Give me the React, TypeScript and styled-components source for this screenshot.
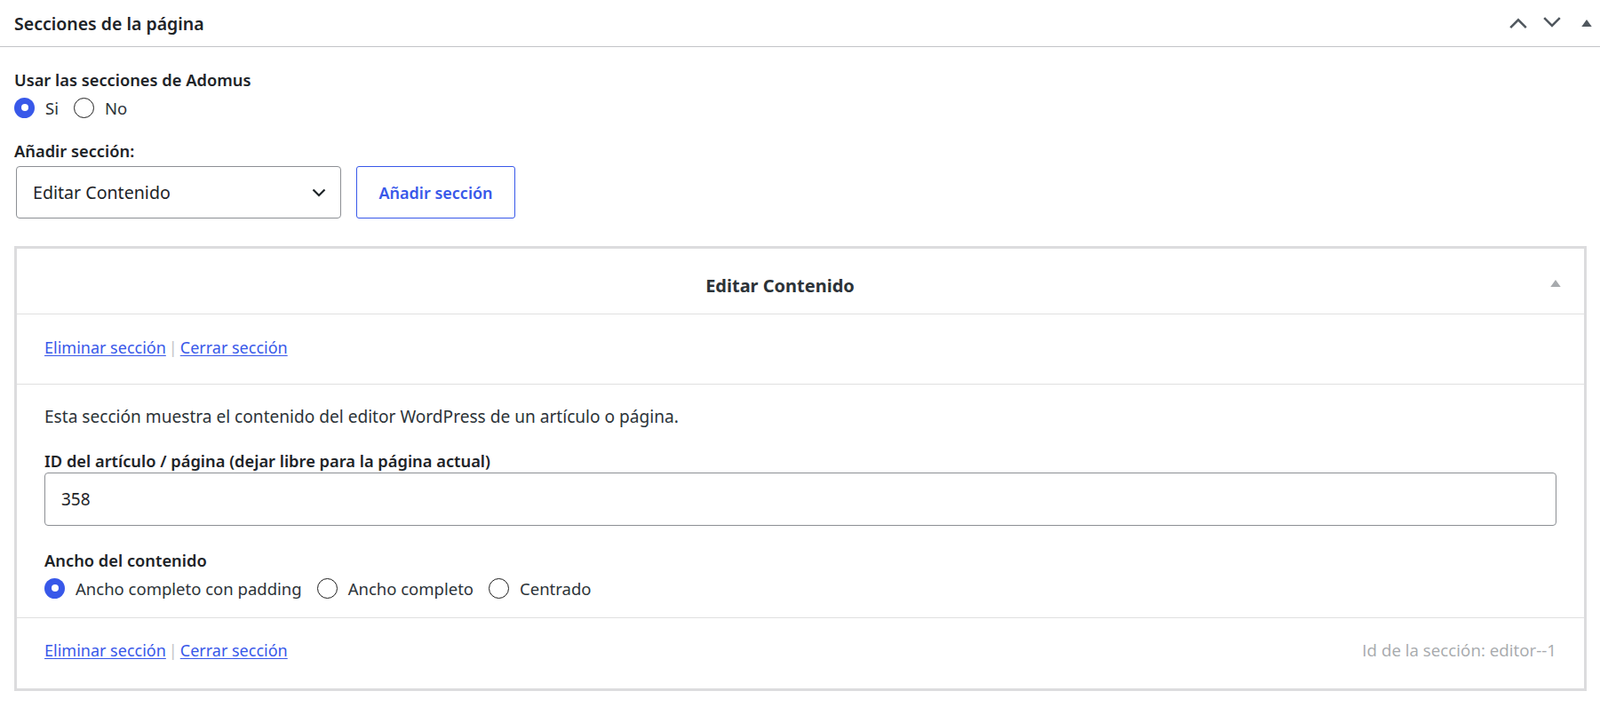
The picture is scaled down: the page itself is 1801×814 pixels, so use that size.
import React, { useState } from 'react'
import styled, { createGlobalStyle } from 'styled-components'

const GlobalStyle = createGlobalStyle`
  body {
    margin: 0;
    background: #fff;
    font-family: "Noto Sans", "Open Sans", sans-serif;
    color: #1d2327;
  }
`

const BLUE = '#3858e9'

const Panel = styled.div`
  width: 100%;
`

const PanelHeader = styled.div`
  height: 52px;
  display: flex;
  align-items: center;
  justify-content: space-between;
  padding: 0 9px 0 16px;
  border-bottom: 1px solid #c3c4c7;
`

const PanelTitle = styled.h2`
  margin: 0;
  font-size: 19.5px;
  font-weight: 600;
  color: #1d2327;
`

const HeaderActions = styled.div`
  display: flex;
  align-items: center;
`

const IconButton = styled.span<{ $ml?: number }>`
  display: flex;
  align-items: center;
  justify-content: center;
  margin-left: ${p => p.$ml ?? 0}px;
  color: #50575e;
`

const PanelBody = styled.div`
  padding: 25px 15px 36px 16px;
`

const FieldLabel = styled.div<{ $gap?: number }>`
  font-size: 18.3px;
  font-weight: 600;
  line-height: 24px;
  color: #1d2327;
  margin-bottom: ${p => p.$gap ?? 7}px;
`

const RadioRow = styled.div<{ $gap?: number }>`
  display: flex;
  align-items: center;
  gap: 17px;
  height: 24px;
  margin-bottom: ${p => p.$gap ?? 0}px;
`

const RadioLabel = styled.label`
  display: flex;
  align-items: center;
  gap: 12px;
  font-size: 18.5px;
  color: #2c3338;
  cursor: pointer;
`

const RadioCircle = styled.span<{ $checked: boolean }>`
  width: 23px;
  height: 23px;
  box-sizing: border-box;
  border-radius: 50%;
  flex: none;
  display: flex;
  align-items: center;
  justify-content: center;
  background: ${p => (p.$checked ? BLUE : '#fff')};
  border: ${p => (p.$checked ? 'none' : '1.4px solid #1e1e1e')};

  &::after {
    content: '';
    width: 8px;
    height: 8px;
    border-radius: 50%;
    background: #fff;
    display: ${p => (p.$checked ? 'block' : 'none')};
  }
`

const AddRow = styled.div`
  display: flex;
  align-items: center;
  gap: 17px;
  margin-left: 2px;
  margin-bottom: 31px;
`

const SelectBox = styled.div`
  width: 366px;
  height: 59px;
  box-sizing: border-box;
  border: 1px solid #8c8f94;
  border-radius: 4px;
  display: flex;
  align-items: center;
  justify-content: space-between;
  padding: 0 16px 0 18px;
  font-size: 19.6px;
  color: #1d2327;
`

const AddButton = styled.button`
  height: 59px;
  width: 179px;
  box-sizing: border-box;
  padding: 0;
  background: #fff;
  border: 1px solid ${BLUE};
  border-radius: 3px;
  color: ${BLUE};
  font-family: inherit;
  font-size: 18px;
  font-weight: 600;
  cursor: pointer;
`

const SectionBox = styled.div`
  border: 3px solid #dcdcde;
`

const SectionHeader = styled.div`
  position: relative;
  display: flex;
  justify-content: center;
  align-items: center;
  padding: 29px 66px 18px 20px;
  line-height: 26px;
  font-size: 20px;
  font-weight: 700;
  color: #2c3338;
  border-bottom: 1px solid #e0e0e0;
`

const HeaderToggle = styled.span`
  position: absolute;
  right: 26px;
  top: 50%;
  margin-top: -2px;
  display: flex;
  color: #a7aaad;
`

const LinksRow = styled.div<{ $footer?: boolean }>`
  display: flex;
  align-items: center;
  justify-content: space-between;
  padding: ${p => (p.$footer ? '24px 31px 31px' : '25px 31px 29px')};
  line-height: 24px;
  border-bottom: ${p => (p.$footer ? 'none' : '1px solid #e0e0e0')};
`

const Links = styled.div`
  display: flex;
  align-items: center;
  gap: 3px;
  font-size: 18px;
`

const ActionLink = styled.a`
  color: ${BLUE};
  text-decoration: underline;
  text-underline-offset: 2px;
  cursor: pointer;
`

const Divider = styled.span`
  color: #c3c4c7;
`

const SectionId = styled.span`
  font-family: "Open Sans", "Noto Sans", sans-serif;
  font-size: 18.8px;
  color: #a7aaad;
`

const SectionContent = styled.div`
  padding: 24px 31px 21px;
  border-bottom: 1px solid #e0e0e0;
`

const Description = styled.p`
  margin: 0 0 26px;
  font-size: 19.1px;
  line-height: 24px;
  color: #2c3338;
`

const TextInput = styled.input`
  display: block;
  width: 100%;
  height: 60px;
  box-sizing: border-box;
  border: 1px solid #8c8f94;
  border-radius: 4px;
  padding: 0 18px;
  font-family: inherit;
  font-size: 19px;
  color: #1d2327;
  margin-bottom: 27px;
  outline: none;
`

const Chevron = ({ dir, size = 22 }: { dir: 'up' | 'down'; size?: number }) => (
  <svg width={size} height={size * 0.6} viewBox="0 0 20 12" fill="none">
    <path
      d={dir === 'up' ? 'M2 11 L10 3 L18 11' : 'M2 1 L10 9 L18 1'}
      stroke="currentColor"
      strokeWidth="2.3"
    />
  </svg>
)

const Triangle = ({ w = 13 }: { w?: number }) => (
  <svg width={w} height={w * 0.7} viewBox="0 0 13 9">
    <path d="M6.5 0 L13 9 L0 9 Z" fill="currentColor" />
  </svg>
)

const SelectArrow = () => (
  <svg width="16" height="10" viewBox="0 0 16 10" fill="none">
    <path d="M1.5 1.5 L8 8 L14.5 1.5" stroke="#1d2327" strokeWidth="2.2" />
  </svg>
)

type Option = { value: string; label: string }

const RadioGroup = ({
  options,
  value,
  onChange,
  gap,
}: {
  options: Option[]
  value: string
  onChange: (v: string) => void
  gap?: number
}) => (
  <RadioRow $gap={gap}>
    {options.map(o => (
      <RadioLabel key={o.value} onClick={() => onChange(o.value)}>
        <RadioCircle $checked={o.value === value} />
        {o.label}
      </RadioLabel>
    ))}
  </RadioRow>
)

const SectionLinks = () => (
  <Links>
    <ActionLink>Eliminar sección</ActionLink>
    <Divider>|</Divider>
    <ActionLink>Cerrar sección</ActionLink>
  </Links>
)

const App: React.FC = () => {
  const [useSections, setUseSections] = useState('si')
  const [width, setWidth] = useState('padding')
  const [postId, setPostId] = useState('358')

  return (
    <Panel>
      <GlobalStyle />
      <PanelHeader>
        <PanelTitle>Secciones de la página</PanelTitle>
        <HeaderActions>
          <IconButton><Chevron dir="up" /></IconButton>
          <IconButton $ml={16}><Chevron dir="down" /></IconButton>
          <IconButton $ml={22}><Triangle w={12} /></IconButton>
        </HeaderActions>
      </PanelHeader>

      <PanelBody>
        <FieldLabel>Usar las secciones de Adomus</FieldLabel>
        <RadioGroup
          gap={25}
          value={useSections}
          onChange={setUseSections}
          options={[
            { value: 'si', label: 'Si' },
            { value: 'no', label: 'No' },
          ]}
        />

        <FieldLabel $gap={5}>Añadir sección:</FieldLabel>
        <AddRow>
          <SelectBox>
            Editar Contenido
            <SelectArrow />
          </SelectBox>
          <AddButton>Añadir sección</AddButton>
        </AddRow>

        <SectionBox>
          <SectionHeader>
            Editar Contenido
            <HeaderToggle><Triangle w={12} /></HeaderToggle>
          </SectionHeader>

          <LinksRow>
            <SectionLinks />
          </LinksRow>

          <SectionContent>
            <Description>
              Esta sección muestra el contenido del editor WordPress de un artículo o página.
            </Description>
            <FieldLabel $gap={1}>ID del artículo / página (dejar libre para la página actual)</FieldLabel>
            <TextInput value={postId} onChange={e => setPostId(e.target.value)} />
            <FieldLabel>Ancho del contenido</FieldLabel>
            <RadioGroup
              value={width}
              onChange={setWidth}
              options={[
                { value: 'padding', label: 'Ancho completo con padding' },
                { value: 'full', label: 'Ancho completo' },
                { value: 'center', label: 'Centrado' },
              ]}
            />
          </SectionContent>

          <LinksRow $footer>
            <SectionLinks />
            <SectionId>Id de la sección: editor--1</SectionId>
          </LinksRow>
        </SectionBox>
      </PanelBody>
    </Panel>
  )
}

export default App
